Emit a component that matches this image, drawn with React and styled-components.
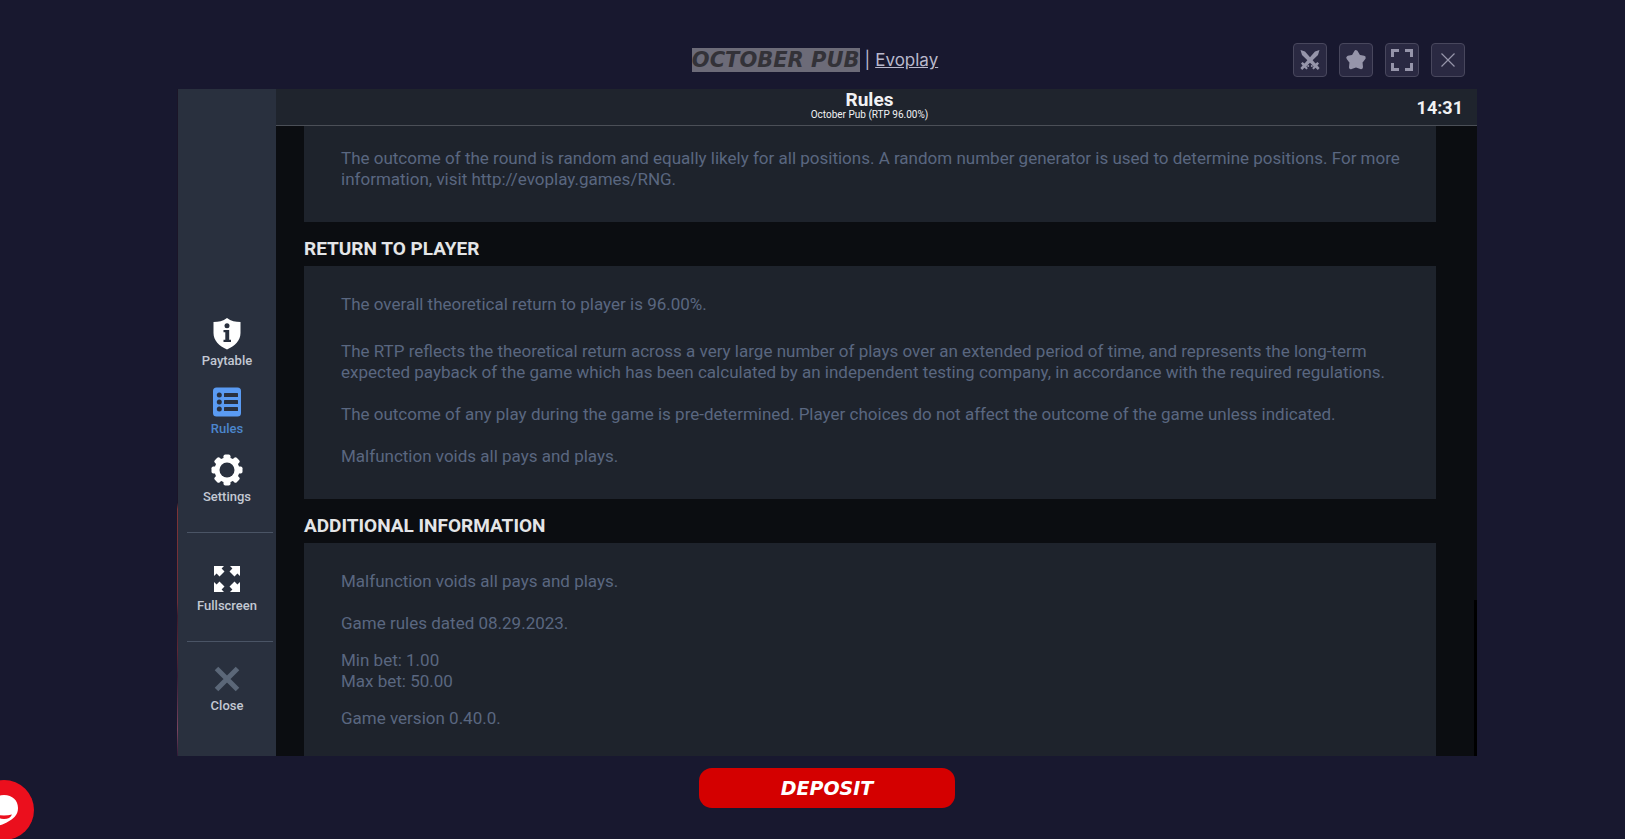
import React from 'react';
import styled, { createGlobalStyle } from 'styled-components';

const GlobalStyle = createGlobalStyle`
  * {
    box-sizing: border-box;
  }

  body {
    margin: 0;
    background-color: #18182f;
    font-family: Roboto, "Liberation Sans", sans-serif;
  }
`;

const Page = styled.div`
  display: flex;
  flex-direction: column;
  height: 100vh;
  overflow: hidden;
`;

const TopBar = styled.header`
  display: grid;
  grid-template-columns: 1fr auto 1fr;
  align-items: center;
  padding: 43px 160px 12px 165px;
`;

const GameTitle = styled.div`
  grid-column: 2;
  display: flex;
  align-items: center;
  gap: 5px;
  color: #b9b8cc;
  font-family: Inter, "Open Sans", sans-serif;
  font-size: 17px;
  line-height: 24px;
`;

const GameName = styled.h1`
  margin: 0;
  background-color: #6c6b78;
  color: #333238;
  font-family: "DejaVu Sans", sans-serif;
  font-size: 21px;
  font-style: italic;
  font-weight: 700;
  line-height: 24px;
  text-transform: uppercase;
`;

const ProviderLink = styled.a`
  color: #b9b8cc;
  text-decoration: underline;
`;

const Actions = styled.div`
  display: flex;
  justify-content: flex-end;
  gap: 12px;
`;

const ActionButton = styled.button`
  display: flex;
  align-items: center;
  justify-content: center;
  width: 34px;
  height: 34px;
  padding: 0;
  border: 1px solid #48475d;
  border-radius: 4px;
  background-color: #2a2942;
  color: #9695aa;
  cursor: pointer;
`;

const GameFrame = styled.main`
  display: flex;
  flex: 1;
  min-height: 0;
  margin: 0 148px 0 177px;
  padding-left: 1px;
  background: linear-gradient(#1b1528 62%, #7d3436 63%, #6d2d38 77%, #3a1a2c 79%, #5f2735 84%, #371a32 88%, #7a4560 96%, #301a36);
`;

const Sidebar = styled.nav`
  display: flex;
  flex-direction: column;
  justify-content: flex-end;
  flex: 0 0 98px;
  padding: 0 3px 42px 9px;
  background-color: #29303e;
`;

const NavGroup = styled.div`
  display: flex;
  flex-direction: column;
  align-items: center;
  gap: 17px;
  padding: ${props => props.$padding};
  border-bottom: ${props => props.$divided ? '1px solid #4a5465' : 'none'};
`;

const NavButton = styled.button`
  display: flex;
  flex-direction: column;
  align-items: center;
  gap: 3px;
  padding: 0 6px 0 0;
  border: 0;
  background: none;
  color: ${props => props.$active ? '#4c86cc' : '#c3c8d3'};
  font-family: inherit;
  font-size: 13px;
  font-weight: 500;
  line-height: 16px;
  cursor: pointer;

  svg {
    display: block;
    width: 32px;
    height: 32px;
    color: ${props => props.$active ? '#5a9bf3' : '#ffffff'};
  }
`;

const Content = styled.section`
  display: flex;
  flex-direction: column;
  flex: 1;
  min-width: 0;
  background: linear-gradient(#000000, #000000) right bottom / 3px 156px no-repeat #0b0d11;
`;

const ContentHeader = styled.div`
  display: grid;
  grid-template-columns: 1fr auto 1fr;
  align-items: center;
  height: 37px;
  padding: 0 14px 0 0;
  border-bottom: 1px solid #4b4f57;
  background-color: #1f242d;
`;

const ScreenTitle = styled.div`
  grid-column: 2;
  padding-bottom: 3px;
  color: #f1f2f4;
  text-align: center;
`;

const ScreenName = styled.h2`
  margin: 0;
  font-size: 19px;
  font-weight: 700;
  line-height: 19px;
`;

const ScreenInfo = styled.p`
  margin: 0;
  font-size: 10px;
  line-height: 12px;
`;

const Clock = styled.time`
  color: #f1f2f4;
  font-size: 18px;
  font-weight: 700;
  text-align: right;
`;

const RulesList = styled.div`
  flex: 1;
  min-height: 0;
  padding: 0 41px 0 28px;
  overflow: hidden;
`;

const SectionTitle = styled.h3`
  margin: 0;
  padding: 15px 0 5px;
  color: #e4e5e7;
  font-size: 19px;
  font-weight: 700;
  line-height: 24px;
  text-transform: uppercase;
`;

const Panel = styled.div`
  display: flex;
  flex-direction: column;
  gap: ${props => props.$gap || 21}px;
  padding: ${props => props.$top || 28}px 20px 32px 37px;
  background-color: #1e232c;
`;

const Text = styled.p`
  margin: 0;
  padding-bottom: ${props => props.$spaced ? 5 : 0}px;
  color: #5a6780;
  font-size: 17px;
  line-height: 21px;
`;

const Footer = styled.footer`
  display: flex;
  justify-content: center;
  padding: 12px 148px 31px 177px;
`;

const DepositButton = styled.button`
  width: 256px;
  height: 40px;
  padding: 0;
  border: 0;
  border-radius: 13px;
  background-color: #d40000;
  color: #ffffff;
  font-family: "DejaVu Sans", sans-serif;
  font-size: 19px;
  font-style: italic;
  font-weight: 700;
  text-transform: uppercase;
  cursor: pointer;
`;

const ChatButton = styled.button`
  position: fixed;
  bottom: -1px;
  left: -26px;
  width: 60px;
  height: 60px;
  padding: 0;
  border: 0;
  border-radius: 50%;
  background-color: #eb0f1d;
  cursor: pointer;

  svg {
    display: block;
  }
`;

const SwordsIcon = () => (
  <svg width="22" height="22" viewBox="0 0 22 22" fill="currentColor" aria-hidden="true">
    <path d="M1.500 1 6 2.500 16.500 14.500 18.500 13 20 14.500 18.400 16.600 20.600 19 18.800 21 16.500 18.700 14.600 20.600 13.200 19.200 14.600 17.200 3 6Z" />
    <path d="M20.500 1 16 2.500 5.500 14.500 3.500 13 2 14.500 3.600 16.600 1.400 19 3.200 21 5.500 18.700 7.400 20.600 8.800 19.200 7.400 17.200 19 6Z" />
    <circle cx="9.200" cy="17" r="1" />
    <circle cx="12.800" cy="17" r="1" />
  </svg>
);

const StarIcon = () => (
  <svg width="22" height="22" viewBox="0 0 22 22" fill="currentColor" stroke="currentColor" strokeWidth="4" strokeLinejoin="round" aria-hidden="true">
    <path d="m11 3.200 2.500 4.400 5.200 1.200-3.200 4.200.5 5.200L11 16.400l-5 1.800.5-5.200-3.200-4.200 5.200-1.200Z" />
  </svg>
);

const ExpandIcon = () => (
  <svg width="24" height="24" viewBox="0 0 24 24" fill="none" stroke="currentColor" strokeWidth="3" aria-hidden="true">
    <path d="M2.500 9V2.500H9M15 2.500h6.500V9M21.500 15v6.500H15M9 21.500H2.500V15" />
  </svg>
);

const CloseIcon = () => (
  <svg width="14" height="14" viewBox="0 0 14 14" fill="none" stroke="currentColor" strokeWidth="1.200" aria-hidden="true">
    <path d="m.5.5 13 13M13.500.5l-13 13" />
  </svg>
);

const ShieldInfoIcon = () => (
  <svg viewBox="0 0 32 32" aria-hidden="true">
    <path fill="currentColor" d="M16 0c4 3 8.500 4 13.500 4v11c0 7.500-5.500 13-13.500 16.500C8 28 2.500 22.500 2.500 15V4C7.500 4 12 3 16 0Z" />
    <circle cx="16" cy="7.800" r="2.500" fill="#29303e" />
    <path fill="#29303e" d="M12.500 12h5.700v9.800H20V24h-7.500v-2.200h1.800v-7.600h-1.800Z" />
  </svg>
);

const ListIcon = () => (
  <svg viewBox="0 0 32 32" aria-hidden="true">
    <rect x="2" y="1.500" width="28" height="29" rx="3.500" fill="currentColor" />
    <g fill="#29303e">
      <circle cx="8.300" cy="9" r="2.500" />
      <circle cx="8.300" cy="16" r="2.500" />
      <circle cx="8.300" cy="23" r="2.500" />
      <rect x="13" y="7" width="14" height="4" rx="0.500" />
      <rect x="13" y="14" width="14" height="4" rx="0.500" />
      <rect x="13" y="21" width="14" height="4" rx="0.500" />
    </g>
  </svg>
);

const GearIcon = () => (
  <svg viewBox="0 0 32 32" aria-hidden="true">
    <g fill="currentColor">
      {[0, 45, 90, 135].map(angle => (
        <rect key={angle} x="12.500" y="0.500" width="7" height="31" rx="1.800" transform={`rotate(${angle} 16 16)`} />
      ))}
      <circle cx="16" cy="16" r="12.500" />
    </g>
    <circle cx="16" cy="16" r="7.500" fill="#29303e" />
  </svg>
);

const ArrowsIcon = () => (
  <svg viewBox="0 0 32 32" fill="currentColor" aria-hidden="true">
    {[0, 90, 180, 270].map(angle => (
      <path key={angle} transform={`rotate(${angle} 16 16)`} d="M3 3h10L10.600 5.600l2.900 2.900-5 5-2.900-2.900L3 13Z" />
    ))}
  </svg>
);

const CrossIcon = () => (
  <svg viewBox="0 0 32 32" fill="none" stroke="#5b6778" strokeWidth="5" aria-hidden="true">
    <path d="m5.500 5.500 21 21M26.500 5.500l-21 21" />
  </svg>
);

const ChatIcon = () => (
  <svg width="60" height="60" viewBox="0 0 60 60" aria-hidden="true">
    <path fill="#ffffff" d="M30 15c8.500 0 14 5.500 14 13 0 6-3.500 10-8 12.500C31 44 26 46 20 46v-6c-3-3-4-7-4-11 0-8 6-14 14-14Z" />
    <path fill="#eb0f1d" d="M22 34.500q8 2 16 0-2 4.500-8 4.500t-8-4.500Z" />
  </svg>
);

const App = () => (
  <>
    <GlobalStyle />
    <Page>
      <TopBar>
        <GameTitle>
          <GameName>October Pub</GameName>
          <span>|</span>
          <ProviderLink href="#evoplay">Evoplay</ProviderLink>
        </GameTitle>
        <Actions>
          <ActionButton type="button" aria-label="Battle"><SwordsIcon /></ActionButton>
          <ActionButton type="button" aria-label="Favourite"><StarIcon /></ActionButton>
          <ActionButton type="button" aria-label="Expand"><ExpandIcon /></ActionButton>
          <ActionButton type="button" aria-label="Exit game"><CloseIcon /></ActionButton>
        </Actions>
      </TopBar>

      <GameFrame>
        <Sidebar>
          <NavGroup $divided $padding="0 0 27px">
            <NavButton type="button"><ShieldInfoIcon />Paytable</NavButton>
            <NavButton type="button" $active><ListIcon />Rules</NavButton>
            <NavButton type="button"><GearIcon />Settings</NavButton>
          </NavGroup>
          <NavGroup $divided $padding="30px 0 27px">
            <NavButton type="button"><ArrowsIcon />Fullscreen</NavButton>
          </NavGroup>
          <NavGroup $padding="21px 0 0">
            <NavButton type="button"><CrossIcon />Close</NavButton>
          </NavGroup>
        </Sidebar>

        <Content>
          <ContentHeader>
            <ScreenTitle>
              <ScreenName>Rules</ScreenName>
              <ScreenInfo>October Pub (RTP 96.00%)</ScreenInfo>
            </ScreenTitle>
            <Clock>14:31</Clock>
          </ContentHeader>
          <RulesList>
            <Panel $top={22}>
              <Text>
                The outcome of the round is random and equally likely for all positions. A random number generator is used to determine positions. For more
                information, visit http://evoplay.games/RNG.
              </Text>
            </Panel>
            <SectionTitle>Return to player</SectionTitle>
            <Panel>
              <Text $spaced>The overall theoretical return to player is 96.00%.</Text>
              <Text>
                The RTP reflects the theoretical return across a very large number of plays over an extended period of time, and represents the long-term
                expected payback of the game which has been calculated by an independent testing company, in accordance with the required regulations.
              </Text>
              <Text>The outcome of any play during the game is pre-determined. Player choices do not affect the outcome of the game unless indicated.</Text>
              <Text>Malfunction voids all pays and plays.</Text>
            </Panel>
            <SectionTitle>Additional information</SectionTitle>
            <Panel $gap={16}>
              <Text $spaced>Malfunction voids all pays and plays.</Text>
              <Text>Game rules dated 08.29.2023.</Text>
              <Text>
                Min bet: 1.00
                <br />
                Max bet: 50.00
              </Text>
              <Text>Game version 0.40.0.</Text>
            </Panel>
          </RulesList>
        </Content>
      </GameFrame>

      <Footer>
        <DepositButton type="button">Deposit</DepositButton>
      </Footer>
      <ChatButton type="button" aria-label="Open chat"><ChatIcon /></ChatButton>
    </Page>
  </>
);

export default App;
